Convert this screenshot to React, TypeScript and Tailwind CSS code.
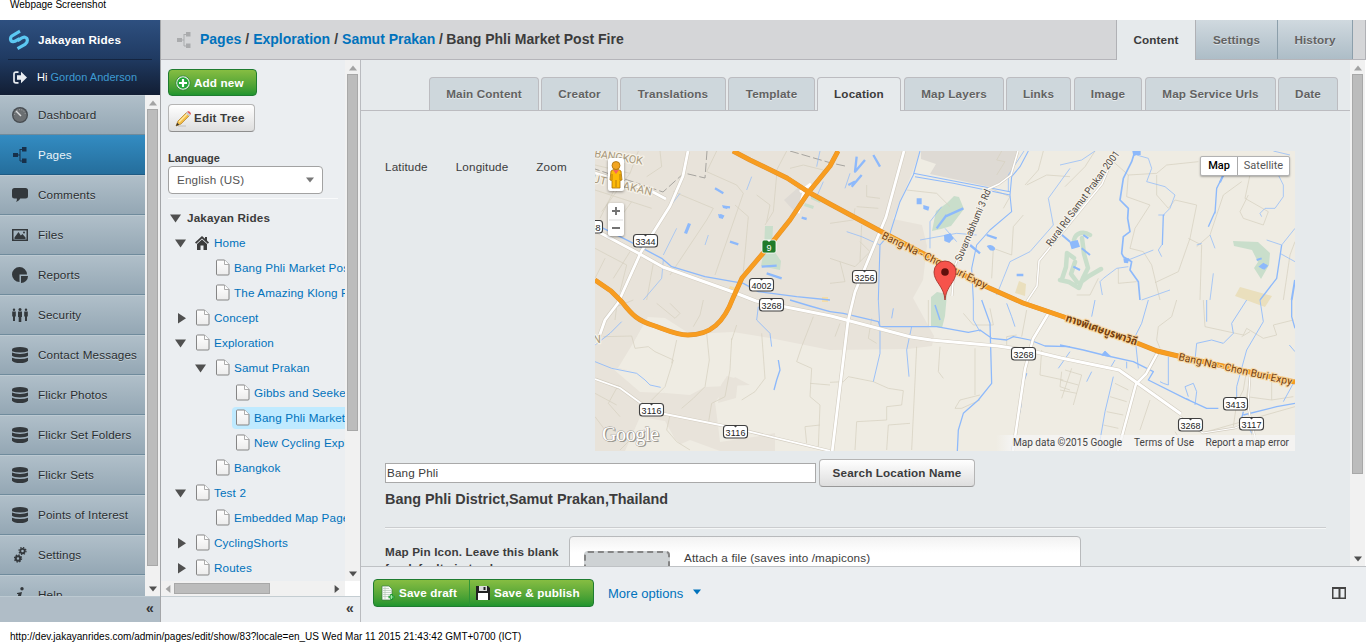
import React from "react";

type IconProps = { className?: string };

const Logo = () => (
  <svg width="22" height="22" viewBox="0 0 22 22" fill="none" stroke="#5cc8f2" strokeWidth="3.2">
    <path d="M12 2.200 L4.500 6.500 C1.500 8.500 2 12.300 5.200 12.700 C7 12.800 8.500 11.500 11.500 9.600" />
    <path d="M9.500 19.600 L17 15.400 C20.300 13 20 9 17 8.200 C15 7.800 13 9.200 9.500 11.800" />
  </svg>
);

const SignOut = () => (
  <svg width="14" height="13" viewBox="0 0 14 13">
    <path d="M5.500 1.200H3C1.600 1.200 1 1.800 1 3v7c0 1.200.6 1.800 2 1.800h2.500" fill="none" stroke="#e9edf2" strokeWidth="1.700" />
    <path d="M4 4.200h4V.8l6 5.700-6 5.700V8.800H4z" fill="#e9edf2" />
  </svg>
);

const Gauge = () => (
  <svg width="16" height="16" viewBox="0 0 16 16">
    <circle cx="8" cy="8" r="8" fill="#464b50" />
    <circle cx="8" cy="8" r="6.700" fill="#6b6f72" />
    <path d="M2.600 8a5.400 5.400 0 0 1 10.800 0" fill="none" stroke="#a9adaf" strokeWidth="1" strokeDasharray="1 1.400" />
    <path d="M4 4l5 5" stroke="#dcdedf" strokeWidth="1.400" />
  </svg>
);

const SiteMap = ({ className = "" }: IconProps) => (
  <svg width="14" height="16" viewBox="0 0 14 16" className={className} fill="currentColor">
    <rect x="0" y="6" width="5" height="4" />
    <rect x="9" y="0" width="4.500" height="4.500" />
    <rect x="9" y="11.500" width="4.500" height="4.500" />
    <path d="M5 7.500h2v1H5zM6.500 2h1v12h-1zM7 2h2v1H7zM7 13.500h2v1H7z" />
  </svg>
);

const Bubble = () => (
  <svg width="16" height="14" viewBox="0 0 16 14" fill="#33383c">
    <path d="M2.500 0h11A2.500 2.500 0 0 1 16 2.500v5.500a2.500 2.500 0 0 1-2.500 2.500H8.200C7.600 12 6.200 13.200 4 14c.9-1.200 1-2.400.8-3.500H2.500A2.500 2.500 0 0 1 0 8V2.500A2.500 2.500 0 0 1 2.500 0z" />
  </svg>
);

const Picture = () => (
  <svg width="16" height="12" viewBox="0 0 16 12">
    <rect x=".75" y=".75" width="14.500" height="10.500" fill="none" stroke="#33383c" strokeWidth="1.500" />
    <path d="M2.500 10V8.500L6.500 3l2.300 3.500L10.500 5l3 3.500V10z" fill="#33383c" />
    <circle cx="12" cy="3.500" r="1" fill="#33383c" />
  </svg>
);

const Pie = () => (
  <svg width="16" height="16" viewBox="0 0 16 16" fill="#33383c">
    <path d="M7.500 0a7.500 7.500 0 0 1 7.500 7.500H7.500V15a7.500 7.500 0 0 1 0-15z" />
    <path d="M9 9h7a7 7 0 0 1-7 7z" />
  </svg>
);

const People = () => (
  <svg width="16" height="14" viewBox="0 0 16 14" fill="#33383c">
    <circle cx="2" cy="1.800" r="1.200" /><circle cx="8" cy="1.500" r="1.500" /><circle cx="14" cy="1.800" r="1.200" />
    <path d="M.2 3.500h3.600v5H3V13H1V8.500H.2zM6 3.500h4V9h-.7v5H6.700V9H6zM12.200 3.500h3.600v5H15V13h-2V8.500h-.8z" />
  </svg>
);

const Database = () => (
  <svg width="16" height="16" viewBox="0 0 16 16" fill="#33383c">
    <ellipse cx="8" cy="2.200" rx="8" ry="2.200" />
    <path d="M0 2.500h16v1.700q-3 1.300-8 1.300T0 4.200z" />
    <path d="M0 5.500q3 1.400 8 1.400t8-1.400v3.200q-2 1.700-8 1.700T0 8.700zM0 10.700q3 1.400 8 1.400t8-1.400v3q-2 2.300-8 2.300t-8-2.300z" />
  </svg>
);

const Gears = () => (
  <svg width="13" height="16" viewBox="0 0 13 16" fill="none" stroke="#33383c">
    <circle cx="8.500" cy="4" r="2.200" strokeWidth="1.800" />
    <circle cx="8.500" cy="4" r="3.500" strokeWidth="1.200" strokeDasharray="1.400 1.350" />
    <circle cx="4" cy="11.500" r="2.200" strokeWidth="2" />
    <circle cx="4" cy="11.500" r="3.500" strokeWidth="1.400" strokeDasharray="1.400 1.350" />
  </svg>
);

const Info = () => (
  <svg width="8" height="16" viewBox="0 0 8 16" fill="#33383c">
    <circle cx="6" cy="1.800" r="1.700" />
    <path d="M1 6l5-1-2 8 1.800-.8C4.800 14.500 1 16.500 1 13.500L2.400 7 1 7z" />
  </svg>
);

const Doc = () => (
  <svg width="14" height="17" viewBox="0 0 14 17" className="ml-px shrink-0">
    <defs>
      <linearGradient id="docfill" x1="0" y1="0" x2="0" y2="1">
        <stop offset="0" stopColor="#fff" /><stop offset="1" stopColor="#ececec" />
      </linearGradient>
    </defs>
    <path d="M1.500 1h7L13 5.500V15q0 1-1 1H1.500q-1 0-1-1V2q0-1 1-1z" fill="url(#docfill)" stroke="#858585" />
    <path d="M8.500 1v4.500H13" fill="#fff" stroke="#999" strokeWidth=".8" />
  </svg>
);

const House = () => (
  <svg width="14" height="14" viewBox="0 0 14 14" className="shrink-0" fill="#3c3c3c">
    <path d="M7 0L0 6.500l1.200 1.200L7 2.500l5.800 5.200L14 6.500l-2-2V1h-2v1.700z" />
    <path d="M2 8l5-4.500L12 8v6H8.500V9.500h-3V14H2z" />
  </svg>
);

const AddIcon = () => (
  <svg width="16" height="16" viewBox="0 0 16 16">
    <circle cx="8" cy="8" r="7.200" fill="#eaf3ea" stroke="#2c7c34" strokeWidth=".8" />
    <circle cx="8" cy="8" r="5.800" fill="#22a636" />
    <path d="M8 4v8M4 8h8" stroke="#fff" strokeWidth="2.200" />
  </svg>
);

const Pencil = () => (
  <svg width="17" height="17" viewBox="0 0 17 17">
    <path d="M3 16h8" stroke="#aaa" strokeOpacity=".6" />
    <path d="M1 16l2-5L11.500 2.500l3 3L6 14z" fill="#f2bd46" stroke="#b98732" strokeWidth=".8" />
    <path d="M4 12l8.500-8.500" stroke="#ffe9a4" strokeWidth="1.400" />
    <path d="M10.800 3.200l1.500-1.500 3.200 3L14 6.200z" fill="#c9ced4" />
    <path d="M12.200 1.700C13.500.2 17 3 15.500 4.800z" fill="#e65450" />
    <path d="M1 16l1.200-3.200 2 2z" fill="#333" />
  </svg>
);

const DraftIcon = () => (
  <svg width="14" height="16" viewBox="0 0 14 16">
    <path d="M1 1h7l3 3v11H1z" fill="#f7faf7" stroke="#3b7942" strokeWidth=".7" />
    <path d="M2 3.500h6M2 5.500h8M2 7.500h8M2 9.500h8M2 11.500h8M4 2v12" stroke="#b2c6b6" strokeWidth=".7" />
    <path d="M10.500 9v6M7.500 12h6" stroke="#199a2d" strokeWidth="2.500" />
    <path d="M10.500 10v4M8.500 12h4" stroke="#b8f0bb" strokeWidth=".8" />
  </svg>
);

const Floppy = () => (
  <svg width="16" height="16" viewBox="0 0 16 16">
    <path d="M1 1h12l2 2v12H1z" fill="#222" />
    <path d="M4 1h8v5H4z" fill="#ddd" /><path d="M8.500 2h2v3h-2z" fill="#222" />
    <path d="M3 8h10v7H3z" fill="#fff" />
  </svg>
);

type Dir = "up" | "down" | "left" | "right";
const Tri = ({ dir, className = "" }: { dir: Dir; className?: string }) => {
  const paths: Record<Dir, string> = {
    up: "M0 8L5 2l5 6z", down: "M0 2h10L5 8z", left: "M8 0v10L2 5z", right: "M2 0v10l6-5z",
  };
  return (
    <svg viewBox="0 0 10 10" className={className} fill="currentColor"><path d={paths[dir]} /></svg>
  );
};

const TreeArrow = ({ dir }: { dir: Dir }) => (
  <svg width="11" height="11" viewBox="0 0 11 11" className="mt-0.5" fill="#505050">
    <path d={dir === "down" ? "M0 1.500h11L5.500 9.500z" : "M3 0v10.500l8-5.200z"} />
  </svg>
);

const VScroll = ({ thumb }: { thumb: string }) => (
  <div className="flex w-[15px] shrink-0 flex-col items-center justify-between bg-[#f1f1f1]">
    <div className="flex min-h-0 flex-1 flex-col items-center">
      <div className="flex h-3.5 items-center pt-0.5"><Tri dir="up" className="size-2 text-[#a3a3a3]" /></div>
      <div className={"w-[11px] border border-[#a8a8a8] bg-[#bcbcbc] " + thumb} />
    </div>
    <div className="flex h-3.5 items-center"><Tri dir="down" className="size-2 text-[#505050]" /></div>
  </div>
);

const nav: [string, React.ReactNode][] = [
  ["Dashboard", <Gauge />], ["Pages", <SiteMap className="text-[#17304a]" />], ["Comments", <Bubble />],
  ["Files", <Picture />], ["Reports", <Pie />], ["Security", <People />],
  ["Contact Messages", <Database />], ["Flickr Photos", <Database />], ["Flickr Set Folders", <Database />],
  ["Flickr Sets", <Database />], ["Points of Interest", <Database />], ["Settings", <Gears />], ["Help", <Info />],
];

const Sidebar = () => (
  <aside className="flex w-40 shrink-0 flex-col bg-[#b0bdc7]">
    <div className="h-[75px] shrink-0 bg-linear-to-b from-[#2e5080] via-[#203b63] to-[#121e34] text-white">
      <div className="mx-2 flex h-10 items-center border-b border-[#142440] font-bold">
        <Logo /><span className="ml-2">Jakayan Rides</span>
      </div>
      <div className="flex h-[35px] items-center pl-[13px] text-[11px] tracking-[0.02px]">
        <SignOut /><span className="ml-2.5">Hi <span className="text-[#3e9bd2]">Gordon Anderson</span></span>
      </div>
    </div>
    <div className="flex h-[501px] shrink-0">
      <nav className="w-[145px] overflow-hidden">
        {nav.map(([label, icon]) => (
          <div key={label} className={"flex h-10 items-center border-b whitespace-nowrap " + (label === "Pages"
            ? "border-[#1e5a83] bg-linear-to-b from-[#338cc2] to-[#256e9c] text-[#e8f2f8]"
            : "border-[#6f8b9c] border-t border-t-[#bdcad2] bg-linear-to-b from-[#b0bfc9] to-[#94a7b4] text-[#292d30] [text-shadow:0_1px_0_rgba(255,255,255,.4)]")}>
            <span className="flex w-[38px] shrink-0 justify-center pl-0.5">{icon}</span>{label}
          </div>
        ))}
      </nav>
      <VScroll thumb="h-[457px]" />
    </div>
    <div className="flex h-[26px] items-center justify-end border-t border-[#bcc9d1] pr-1.5 pb-0.5 text-[14px] font-bold text-[#333]">«</div>
  </aside>
);

type Row = { indent: string; arrow?: Dir; icon: "doc" | "home" | "none"; label: string; selected?: boolean };
const rows: Row[] = [
  { indent: "pl-[9px]", arrow: "down", icon: "none", label: "Jakayan Rides" },
  { indent: "pl-[14px]", arrow: "down", icon: "home", label: "Home" },
  { indent: "pl-[34px]", icon: "doc", label: "Bang Phli Market Post Fire" },
  { indent: "pl-[34px]", icon: "doc", label: "The Amazing Klong Ride" },
  { indent: "pl-[14px]", arrow: "right", icon: "doc", label: "Concept" },
  { indent: "pl-[14px]", arrow: "down", icon: "doc", label: "Exploration" },
  { indent: "pl-[34px]", arrow: "down", icon: "doc", label: "Samut Prakan" },
  { indent: "pl-[54px]", icon: "doc", label: "Gibbs and Seekers" },
  { indent: "pl-[54px]", icon: "doc", label: "Bang Phli Market Post Fire", selected: true },
  { indent: "pl-[54px]", icon: "doc", label: "New Cycling Exploration" },
  { indent: "pl-[34px]", icon: "doc", label: "Bangkok" },
  { indent: "pl-[14px]", arrow: "down", icon: "doc", label: "Test 2" },
  { indent: "pl-[34px]", icon: "doc", label: "Embedded Map Pages" },
  { indent: "pl-[14px]", arrow: "right", icon: "doc", label: "CyclingShorts" },
  { indent: "pl-[14px]", arrow: "right", icon: "doc", label: "Routes" },
];

const Tree = () => (
  <section className="flex w-[199px] shrink-0 flex-col">
    <div className="flex h-[536px] shrink-0 bg-[#ebeef1]">
      <div className="flex w-[184px] flex-col overflow-hidden">
        <div className="h-[521px] shrink-0 overflow-hidden">
          <div className="flex flex-col items-start pt-[9px] pl-[7px]">
            <button className="flex h-[27px] w-[89px] items-center gap-[3px] rounded border border-[#1f7c31] bg-linear-to-b from-[#86bd42] to-[#1f952f] pl-1.5 font-bold whitespace-nowrap text-white">
              <AddIcon />Add new
            </button>
            <button className="mt-2 flex h-7 w-[87px] items-center gap-0.5 rounded border border-[#b5b5b5] border-b-[#8e8e8e] bg-linear-to-b from-white to-[#dedede] pl-1.5 font-bold whitespace-nowrap text-[#3c3c3c]">
              <Pencil />Edit Tree
            </button>
            <div className="mt-[19px] h-[15px] text-[11px] leading-[14px] font-bold tracking-normal">Language</div>
            <div className="flex h-7 w-[155px] items-center justify-between rounded border border-[#a2a2a2] bg-white px-2 text-[#555]">
              English (US)<Tri dir="down" className="size-2 text-[#777]" />
            </div>
            <div className="mt-1 h-px w-[170px] bg-white/70" />
          </div>
          <div className="mt-1.5">
            {rows.map((r, i) => (
              <div key={i} className={"flex h-[25px] items-center whitespace-nowrap " + r.indent}>
                <span className="flex w-5 shrink-0">{r.arrow && <TreeArrow dir={r.arrow} />}</span>
                <div className={"flex h-[22px] items-center " + (r.selected ? "-ml-[3px] rounded-l bg-[#bfeaff] pl-[3px]" : "")}>
                  {r.icon !== "none" && <span className="flex w-[19px] shrink-0">{r.icon === "doc" ? <Doc /> : <House />}</span>}
                  <span className={r.icon === "none" ? "-ml-[3px] font-bold" : "text-[#0072bc]"}>{r.label}</span>
                </div>
              </div>
            ))}
          </div>
        </div>
        <div className="flex h-[15px] items-center bg-[#f1f1f1]">
          <span className="flex w-[13px] justify-center"><Tri dir="left" className="size-2 text-[#a3a3a3]" /></span>
          <div className="h-[11px] w-24 border border-[#a8a8a8] bg-[#bcbcbc]" />
          <Tri dir="right" className="mr-1 ml-auto size-2 text-[#505050]" />
        </div>
      </div>
      <div className="flex w-[15px] flex-col bg-white"><div className="flex h-[521px]"><VScroll thumb="h-[357px]" /></div></div>
    </div>
    <div className="flex h-[26px] items-center justify-end border-t border-[#c4cdd2] bg-[#ebeef1] pr-1.5 pb-0.5 text-[14px] font-bold">«</div>
  </section>
);

const Shield = ({ x, y, n }: { x: number; y: number; n: string }) => (
  <g>
    <rect x={x - 11.5} y={y - 5.5} width="24" height="12.500" rx="3" fill="#fff" stroke="#3f3f3f" strokeWidth="1.100" />
    <path d={`M${x - 1.5} ${y - 5.5}h4l-2 2z`} fill="#3f3f3f" />
    <text x={x + 0.5} y={y + 5} textAnchor="middle" fontSize="9" fontFamily="Liberation Sans" fill="#222" textLength="20">{n}</text>
  </g>
);

const Tile = ({ x, y, children }: { x: number; y: number; children: React.ReactNode }) => (
  <g transform={`translate(${x} ${y}) scale(.3333333)`}>{children}</g>
);

const minorRoads: [string, number][] = [
  ["M688 151l-5 25-13 30-29 46-23 51L605 320 598 340M595 173l56 18 15 8", 2.8],
  ["M904 151l-18 66-31 75-7 29-16 132", 2.8],
  ["M595 379l25 9 22 16 M660 413l70 14 100 24", 1.8],
  ["M1018 151l-7 24-12 9-11 5-34 79-2 28M1116 151l-14 33-63 77-2 25-10 15", 1.5],
  ["M1158 352l-12 22-10 10-18 67M1048 314l-15 25-8 30-12 82", 2.5],
  ["M1180 417l23 16 32-5 18-7M1250 375l-2 32 10 44", 1.2],
];

const route3268 = "M595 230l15 8 28 15 25 14 70 25 23 9 75 15 80 21 20 3 67 6 34 5 29 7 58 12 17 12 45 32";
const motorway = "M733 151L750 160 787 178 810 193 830 204 882 232 987 287 1023 303 1070 319 1137 343 1157 351 1178 356 1295 382M838 151L830 166 808 193 790 220 770 245 742 278 733 298C724 322 711 335 688 335 676 335 664 329 655 326 638 321 632 315 622 302L611 291 595 280";

const MapArt = () => (
  <svg width="700" height="300" viewBox="595 151 700 300" className="block tracking-normal">
    <rect x="595" y="151" width="700" height="300" fill="#efece3" />
    {/* built-up land */}
    <path d="M595 151H920L912 173 893 219 922 225 927 246 923 280 913 298 934 336 932 346 908 349 830 350 770 338 733 332 690 334 665 318 648 317 635 340 618 368 650 375 665 393 690 395 705 387 750 385 735 377 715 402 718 425 720 442 760 436 775 433 775 451 720 451 690 440 665 451 595 451z" fill="#e8e3da" />
    <path d="M612 368L650 373 665 393 640 392zM648 317L633 344 672 360 676 340z" fill="#efece3" />
    <path d="M727 376l11 3-2 19-18 5 3-18z" fill="#e8e3da" />
    <path d="M625 451l15-34 25 4 10 18 14 12z" fill="#efece3" />
    <path d="M921 151H1018L1009 178 990 187 930 174 936 164 921 159z" fill="#dedad4" />
    <path d="M784 200l17-15 10 9-17 17z" fill="#dedad4" />
    <path d="M1235 296l5-9 32 9-7 11z" fill="#eadfbd" />
    <path d="M1015 293l4-12 7 3-1 12z" fill="#eadfbd" />
    <path d="M730 286l7 2-1 5-8-2zM822 297h6v5h-6z" fill="#f5dda7" />

    {/* parks */}
    <g fill="#c9decb">
      <path d="M765 226h8l-1 22 9 13-1 9-19-4 3-16zM936 211l11-8 7-7 5 1 5 12-13 17-10 3-9 2zM931 297l6-5 10 2-2 22-3 12-11-2zM1233 241l25 1 12 11-1 12-8 14-7-11 4-6-6-12-18-4zM805 203l9 3-1 3-9-3zM811 195l10 4-1 4-9-4z" />
    </g>
    <g fill="none" stroke="#c9decb" strokeWidth="4.500" strokeLinecap="round" strokeLinejoin="round">
      <path d="M1074 240c2-8 10-9 16-5M1082 238l2 16 4 14-5 10-4 10-10-6-9-2M1062 279l4-12 1-14 7 5M1101 269l-12 7-8 6M1075 262l-4 12 6 8" />
    </g>

    {/* parcel lines */}
    <g fill="none" stroke="#d6d0c0" strokeWidth="2.200" strokeLinejoin="round">
      <Tile x={590} y={145}>
        <path d="M15 60L120 85 145 18M120 85L35 200M15 135L185 190M75 130L30 220M125 170L85 225M210 18L215 65 170 95M250 140L370 190 350 225 240 390M380 18L350 80 440 120 460 145 375 390M435 180L475 215 460 380M560 90L550 200 525 240M590 18L555 85 600 100M600 70L640 60 700 75M15 310L110 360 90 440M45 340L15 400M120 320L70 400M190 355L170 465M500 150L540 180 530 230" />
      </Tile>
      <Tile x={830} y={145}>
        <path d="M110 120V155L150 160M80 185L145 190M0 235L70 225 75 190M90 290L120 320 75 365 0 340M95 240L90 350M30 350L45 410 0 415M230 135L320 145 360 185M640 18L625 75 585 120M720 95L650 90 590 120M580 210L550 245 545 330 490 310 485 400M480 130L540 155 520 190M500 90L525 50 500 45 515 18" />
      </Tile>
      <Tile x={1060} y={145}>
        <path d="M15 125L75 65 105 18M160 50L205 90 290 85 320 60 415 50M205 90L200 155 270 180 225 250 210 310 250 320 275 360 300 465M290 90L290 150 325 190 345 165 410 180 390 280 355 380 285 413M385 280L425 300 420 465M545 110L490 150 450 270 410 305M570 90L555 160 625 200 610 240 550 220 540 200 565 150M50 450H90L115 400M175 370V415L230 410M705 290L690 330 670 465" />
      </Tile>
      <Tile x={590} y={300}>
        <path d="M40 110L125 108 135 145 175 140 195 155 250 180 225 260 185 300M260 120L245 190M350 100L358 180 345 260 310 295 275 325M425 115L420 210 405 290 365 310 355 370M440 75L425 120M515 100L525 235 495 275 455 300M670 50L635 140 620 185 665 205 660 290 690 315 685 440M690 375L645 380 650 430M660 250L720 255M15 280L80 315M85 255L55 310 90 350M15 350L45 390M75 60L80 20 130 0M200 10L255 55 270 40 240 10M340 0L330 45 310 80M240 345L230 390 260 425 300 450M120 420L90 450" />
      </Tile>
      <Tile x={830} y={300}>
        <path d="M0 247L40 245 55 230 130 245 175 265 220 272 215 315 170 320 170 360 80 365 75 450M260 140L245 450M330 140L325 215 340 235M435 145V285M450 285L390 300 375 325 395 325 450 300M170 450L175 375 240 370M30 70L15 110M125 55L115 115 140 130M590 30L575 110M635 150L630 225 700 240M695 215L690 260 720 270M295 0V80M400 40L430 75 490 75 480 25M530 135V110L560 105" />
      </Tile>
      <Tile x={1060} y={300}>
        <path d="M15 210L65 225 40 315M35 205L5 295M0 240L55 255M0 270L50 280M165 250L205 270M150 290L200 305M140 335L190 345M130 375L175 385M350 0L335 50 295 80 290 120 300 145M430 0L435 80 550 105 560 85 610 115 650 105 640 75 700 60M545 110L570 95M570 225L560 290 635 300 700 290M520 380L530 310 550 270 560 210M270 300L240 390M345 395L380 450M430 398L705 320M580 450L570 350M635 225V300" />
      </Tile>
    </g>

    {/* district boundaries */}
    <g fill="none" stroke="#a6a49f" strokeWidth="1" strokeDasharray="9 3">
      <path d="M707 151L705 178 684 173 663 192 595 169M790 151L831 163 845 166" />
    </g>

    {/* canals and ponds */}
    <g fill="none" stroke="#8db9fb" strokeWidth="2.600" strokeLinejoin="round">
      <Tile x={590} y={145}>
        <path d="M30 245L120 290 215 340 245 365 345 395 460 415 505 440 620 455 720 465" strokeWidth="4" />
        <path d="M270 145L210 225 190 260M220 345L215 400 160 465M260 250L220 330M355 270L345 300M485 95L470 135M690 18L680 65M700 110L680 155" strokeWidth="2" />
        <path d="M375 130L400 145M400 185L420 187M390 210L402 215M420 290L445 298M515 365L560 362M530 385L575 400M635 218L650 222" strokeWidth="7" />
      </Tile>
      <Tile x={830} y={145}>
        <path d="M270 18L250 90 210 170 180 265 150 300 145 465M250 85L355 105 540 140M255 95L370 115 540 150M595 18L570 65 545 95 540 150 545 200 480 255 440 300 425 370 430 465" strokeWidth="3.200" />
        <path d="M582 18L535 90V140M60 85L45 130M335 185L300 230 300 310M270 285L380 265 440 270M50 260L95 275 150 300M720 70L655 160 670 240 600 320 540 350 520 400 500 450M380 290L345 250" strokeWidth="2.200" />
        <path d="M80 35L75 80 105 45M130 30L150 65M95 90L65 125M345 215L400 190M320 250L350 210M345 280H370M390 325L405 300M450 325L420 300M470 270L500 280M560 390H580M55 120l20-10" strokeWidth="7" />
        <path d="M260 160h15v18h-15zM280 180l18 5-3 12-15-5zM470 303q15-8 25 5 2 12-15 8zM342 270l20-5 8 15-12 14-15-6z" fill="#8db9fb" stroke="none" />
      </Tile>
      <Tile x={1060} y={145}>
        <path d="M225 18L215 50 190 100 180 165 205 190 203 220 210 260 190 275 185 325 190 335 215 350 210 375 235 410 240 465" strokeWidth="5" />
        <path d="M0 60L65 45 105 18M230 30L265 40 275 70 260 110 315 125 345 150 330 190 310 210M305 300L295 315 305 335M295 210H315M205 345L280 315M450 270L465 310M425 295L410 300M460 385L450 465M640 18L690 30M655 90L670 120 670 155 645 190 615 190 600 205 605 215M620 285L665 300M665 300L705 250M660 325L705 350M130 400L170 370 205 365M130 400L120 410 127 450M245 465L330 435" strokeWidth="2.200" />
        <path d="M310 210L307 300M465 200L445 245M490 90L470 130 465 205M665 300L650 400 600 465" strokeWidth="4" />
        <path d="M490 90L480 112M70 270L85 280M0 265L30 290M65 310L90 330M40 365L60 375M590 345L605 340M605 370L620 360M705 405L695 465" strokeWidth="6" />
        <path d="M217 18h25v12h-12l-10 4zM28 290l25-5 7 20-25 8zM190 340h18l-4 15-12-2zM595 365l15-12 15 9-12 12z" fill="#8db9fb" stroke="none" />
      </Tile>
      <Tile x={590} y={300}>
        <path d="M15 135L60 100 95 65M15 185L65 205 140 220 165 240 180 255 212 262" />
        <path d="M600 0L660 18 720 35M565 180L570 210 560 240 552 270" strokeWidth="4" />
        <path d="M505 20L500 60 540 100 545 140" />
      </Tile>
      <Tile x={830} y={300}>
        <path d="M0 35L40 40 145 65 150 80 320 80 415 97 450 90 485 115 530 120 550 110 600 120 645 138 720 140M455 0L480 70 485 250 445 300 400 340 385 390 382 453" strokeWidth="3.800" />
        <path d="M145 0L150 90 150 160 130 245M245 80L230 150 237 230M190 25L185 55M430 0V60L450 95M530 10L545 50 555 80M720 155L685 205" />
        <path d="M590 220L575 260 572 320 545 450M315 15L330 60" strokeWidth="4.500" />
      </Tile>
      <Tile x={1060} y={300}>
        <path d="M0 135L70 150 130 165 220 185 280 215 265 240 375 295 440 325 475 325M550 345L650 320 705 310M550 335L545 355 570 370M695 0V50L705 85" strokeWidth="4" />
        <path d="M265 0L245 70 225 110 235 205M105 0L95 50M325 170V255L310 250 300 245M440 65V0M410 130L455 120 490 130 520 100 515 70 560 0M600 0L610 65 560 150 530 260V300M385 290L375 260 400 250 410 275 405 315M410 130L405 180M160 230L135 335 115 450M95 215L80 245M165 180L150 205M700 250L670 305M565 380L575 400M200 185V205" />
        <path d="M125 165l10-12 18 17zM688 135l17 20M560 370l15 15M375 295l13 4" fill="#8db9fb" />
      </Tile>
      <path d="M688 223l3 1-4 10-3-1zM718 214l5 1v4l-4-1zM722 205l6 2-1 2-4-1z" fill="#8db9fb" stroke="none" />
    </g>

    {/* local roads */}
    <g fill="none" strokeLinejoin="round">
      {minorRoads.map(([d, w]) => <path key={d} d={d} stroke="#d3cdc1" strokeWidth={w + 1.2} />)}
      <path d={route3268} stroke="#d3cdc1" strokeWidth="4.200" />
      {minorRoads.map(([d, w]) => <path key={d} d={d} stroke="#fff" strokeWidth={w} />)}
      <path d={route3268} stroke="#fff" strokeWidth="3" />
    </g>

    {/* motorways */}
    <path d="M800 192l11-8M798 213l6-21" stroke="#fff" strokeWidth="3" />
    <g fill="none" strokeLinejoin="round">
      <path d={motorway} stroke="#df9230" strokeWidth="4.900" />
      <path d={motorway} stroke="#f89d20" strokeWidth="4" />
    </g>

    <g fontFamily="Roboto" fontSize="10.500" stroke="#f6f2e9" strokeWidth="2.500" strokeLinejoin="round" paintOrder="stroke">
      <g fill="#a8997c" fontSize="11">
        <text transform="translate(594 157) rotate(9)" textLength="49">BANGKOK</text>
        <text transform="translate(592 182) rotate(13)" textLength="61">UT PRAKAN</text>
        <text x="593" y="343">N</text>
      </g>
      <g fill="#74400f" stroke="#fbd9a0" strokeOpacity=".8">
        <text transform="translate(881 238) rotate(26)" textLength="116">Bang Na - Chon Buri Expy</text>
        <text transform="translate(1178 360) rotate(12.500)" textLength="116">Bang Na - Chon Buri Expy</text>
        <text transform="translate(1065 321) rotate(19)" fontSize="11" fontWeight="700" fontFamily="Noto Sans Thai, Noto Sans, DejaVu Sans, sans-serif" textLength="75" lengthAdjust="spacingAndGlyphs">ทางพิเศษบูรพาวิถี</text>
      </g>
      <g fill="#4e4843" fontSize="10">
        <text transform="translate(961 262) rotate(-67)" textLength="77" lengthAdjust="spacingAndGlyphs">Suvarnabhumi 3 Rd</text>
        <text transform="translate(1051 247) rotate(-53.500)" textLength="116" lengthAdjust="spacingAndGlyphs">Rural Rd Samut Prakan 2001</text>
      </g>
    </g>

    <Shield x={590} y={226} n="3268" /><Shield x={645} y={240} n="3344" /><Shield x={761} y={284} n="4002" />
    <Shield x={771} y={304} n="3268" /><Shield x={864} y={276} n="3256" /><Shield x={1023} y={353} n="3268" />
    <Shield x={651} y={409} n="3116" /><Shield x={735} y={431} n="3116" /><Shield x={1235} y={403} n="3413" />
    <Shield x={1190} y={424} n="3268" /><Shield x={1251} y={423} n="3117" />
    <rect x="762" y="240" width="14" height="13" rx="2" fill="#207b2a" stroke="#fff" strokeWidth=".8" />
    <path d="M767 240h4l-2 2z" fill="#fff" />
    <text x="769" y="251" fontSize="9" fontFamily="Liberation Sans" textAnchor="middle" fill="#fff">9</text>

    {/* marker */}
    <path d="M945 300c-1-14-11-18-11-28a11 11 0 0 1 22 0c0 10-10 14-11 28z" fill="#f6534b" stroke="#a7352d" strokeWidth=".9" />
    <circle cx="945" cy="272" r="3.800" fill="#5f100c" />

    <g fontFamily="Liberation Serif" fontSize="20">
      <text x="603.200" y="442.200" textLength="57" fill="#77736c" fillOpacity=".75">Google</text>
      <text x="602" y="441" textLength="57" fill="#fff" stroke="#a5a199" strokeWidth=".8" paintOrder="stroke">Google</text>
    </g>

    <defs><linearGradient id="fade"><stop stopColor="#f5f5f5" stopOpacity="0" /><stop offset="1" stopColor="#f5f5f5" stopOpacity=".75" /></linearGradient></defs>
    <rect x="996" y="435" width="14" height="16" fill="url(#fade)" />
    <rect x="1010" y="435" width="285" height="16" fill="#f5f5f5" fillOpacity=".75" />
    <g fontFamily="Roboto" fontSize="10" fill="#444">
      <text x="1013" y="446" textLength="109">Map data ©2015 Google</text>
      <text x="1134" y="446" textLength="60">Terms of Use</text>
      <text x="1205.500" y="446" textLength="83.500">Report a map error</text>
    </g>
  </svg>
);

const MapPanel = () => (
  <div className="relative h-[300px] w-[700px] overflow-hidden">
    <MapArt />
    <div className="absolute top-[7px] left-[13px] flex h-[33px] w-4 justify-center rounded-xs bg-white pt-[3px] shadow-[0_1px_3px_rgba(0,0,0,.4)]">
      <svg width="14" height="28" viewBox="0 0 14 28" stroke="#a86f0b" strokeWidth=".8">
        <path d="M2 10q5-4 10 0l1 9-2 .5V27H3v-7.500L1 19z" fill="#fdba08" />
        <circle cx="7" cy="4.500" r="4" fill="#f2a521" />
        <path d="M4 9h6l-3 4z" fill="#f4665e" stroke="none" /><path d="M7 19v7M3 13v6M11 13v6" />
      </svg>
    </div>
    <div className="absolute top-[52px] left-[13px] flex h-[33px] w-4 flex-col items-center rounded-xs bg-white shadow-[0_1px_3px_rgba(0,0,0,.4)]">
      <svg width="16" height="33" viewBox="0 0 16 33" fill="none"><path d="M4 8h8M8 4v8M4 25h8" stroke="#737373" strokeWidth="1.900" /><path d="M1 17h14" stroke="#ddd" /></svg>
    </div>
    <div className="absolute top-[5px] left-[605px] flex h-5 w-[90px] items-center rounded-xs border border-[#b2b2b2] bg-white font-[Roboto] text-[11px] tracking-normal shadow-[0_1px_2px_rgba(0,0,0,.3)]">
      <span className="w-9 text-center font-medium text-black">Map</span>
      <span className="flex h-full flex-1 items-center justify-center border-l border-[#aaa] text-[#565656]">Satellite</span>
    </div>
  </div>
);

const tabs: [string, string][] = [
  ["Main Content", "w-[110px]"], ["Creator", "w-[77px]"], ["Translations", "w-[106px]"], ["Template", "w-[87px]"],
  ["Location", "w-[84px]"], ["Map Layers", "ml-px w-[100px]"], ["Links", "w-[65px]"], ["Image", "ml-px w-[68px]"],
  ["Map Service Urls", "ml-px w-[131px]"], ["Date", "w-[60px]"],
];

const ContentArea = () => (
  <div className="flex h-[506px]">
    <div className="flex w-[989px] flex-col overflow-hidden bg-[#e6eaec]">
      <div className="flex h-[51px] shrink-0 items-end justify-end gap-0.5 border-b border-[#bcbcc0] pr-3">
        {tabs.map(([t, w]) => (
          <div key={t} className={"flex shrink-0 items-center justify-center rounded-t border border-[#bcbcc0] font-bold whitespace-nowrap " + w +
            (t === "Location" ? " -mb-px h-[34px] border-b-0 bg-[#e6eaec] pb-px text-[#3c3c3c]" : " h-[33px] border-b-0 bg-[#ced7dc] text-[#626262] [text-shadow:0_1px_0_rgba(255,255,255,.5)]")}>{t}</div>
        ))}
      </div>
      <div className="flex shrink-0 pt-10 pl-6">
        <div className="flex w-[210px] gap-7 pt-[7.5px] leading-4"><span>Latitude</span><span>Longitude</span><span>Zoom</span></div>
        <MapPanel />
      </div>
      <div className="mt-2 flex h-7 shrink-0 items-center gap-[3px] pl-6">
        <div className="flex h-5 w-[431px] items-center border border-[#a9a9a9] bg-white pl-px">Bang Phli</div>
        <button className="h-7 w-[156px] rounded border border-[#b5b5b5] border-b-[#999] bg-linear-to-b from-white to-[#dedede] font-bold text-[#3c3c3c]">Search Location Name</button>
      </div>
      <div className="mt-0.5 ml-6 shrink-0 text-[14.4px] leading-5 font-bold tracking-normal">Bang Phli District,Samut Prakan,Thailand</div>
      <div className="mt-[18px] mr-6 ml-6 h-0.5 shrink-0 border-t border-[#cbcdcf] bg-white/60" />
      <div className="mt-[7px] ml-6 flex shrink-0">
        <div className="w-[184px] pt-[7.5px] leading-4 font-bold whitespace-nowrap">Map Pin Icon. Leave this blank<br />for default pin to show</div>
        <div className="flex h-20 w-[512px] rounded-t border border-[#b8babc] bg-linear-to-b from-[#f2f2f2] to-white to-20% pt-3 pl-[14px]">
          <div className="mt-0.5 h-16 w-[86px] rounded-sm border-2 border-dashed border-[#858585] bg-[#ced2d4]" />
          <div className="pt-[.5px] pl-3.5 leading-4">Attach a file (saves into /mapicons)</div>
        </div>
      </div>
    </div>
    <VScroll thumb="h-[400px]" />
  </div>
);

const topTabs: [string, string][] = [["Content", "w-20"], ["Settings", "w-[82px]"], ["History", "w-[75px]"]];

export default function App() {
  return (
    <div className="flex h-[642px] w-[1366px] flex-col overflow-hidden bg-white font-['Liberation_Sans',Arial,sans-serif] text-[11.7px] tracking-[0.14px] text-[#3c3c3c]">
      <div className="h-5 shrink-0 pl-2.5 text-[10px] leading-[10px] tracking-normal text-black">Webpage Screenshot</div>
      <div className="flex h-[602px] shrink-0">
        <Sidebar />
        <div className="flex w-[1206px] flex-col border-l border-[#a4a6a9]">
          <header className="flex h-10 shrink-0 border-b border-[#b5b5ba] bg-[#d5d6d8]">
            <div className="flex flex-1 items-center pl-4 text-[14px] font-bold tracking-normal">
              <SiteMap className="mr-[9px] text-[#aaabad]" />
              <span className="text-[#0072bc]">Pages</span><span className="mx-1">/</span>
              <span className="text-[#0072bc]">Exploration</span><span className="mx-1">/</span>
              <span className="text-[#0072bc]">Samut Prakan</span><span className="mx-[3.500px]">/</span>
              <span>Bang Phli Market Post Fire</span>
            </div>
            {topTabs.map(([t, w]) => (
              <div key={t} className={"flex items-center justify-center font-bold " + w + (t === "Content"
                ? " -mb-px h-10 border-x border-[#b0b1b5] bg-[#e6eaec]"
                : " h-[39px] border-r border-[#8c9fab] bg-linear-to-b from-[#d0d9df] to-[#adbdc7] text-[#626262] [text-shadow:0_1px_0_rgba(255,255,255,.5)]")}>{t}</div>
            ))}
            <div className="w-[13px] border-r border-[#b0b1b5]" />
          </header>
          <div className="flex min-h-0 flex-1">
            <Tree />
            <main className="flex w-[1006px] flex-col border-l border-[#b9bbbf]">
              <ContentArea />
              <footer className="flex flex-1 items-center border-t border-[#bfc2c5] bg-[#ebeef1] pr-5 pb-1 pl-3">
                <div className="flex h-7 w-[221px] overflow-hidden rounded border border-[#1f7c31] bg-linear-to-b from-[#86bd42] to-[#1f952f] font-bold whitespace-nowrap text-white">
                  <div className="flex w-24 items-center gap-1 border-r border-[#2f9536] pl-[7px]"><DraftIcon />Save draft</div>
                  <div className="flex flex-1 items-center gap-[3px] pl-[5px]"><Floppy />Save &amp; publish</div>
                </div>
                <span className="ml-3.5 pt-0.5 text-[13px] tracking-normal text-[#0072bc]">More options</span>
                <Tri dir="down" className="mb-0.5 ml-2.5 size-2 text-[#0072bc]" />
                <svg width="14" height="12" viewBox="0 0 14 12" className="ml-auto" fill="none" stroke="#444">
                  <path d="M.75.75h12.500v10.500H.75z" strokeWidth="1.500" /><path d="M0 1h14M7.500 1v10" strokeWidth="2" stroke="#444" />
                </svg>
              </footer>
            </main>
          </div>
        </div>
      </div>
      <div className="h-5 shrink-0 pt-[9px] pl-2.5 text-[10px] leading-[11px] tracking-[0.015px] text-black">http://dev.jakayanrides.com/admin/pages/edit/show/83?locale=en_US Wed Mar 11 2015 21:43:42 GMT+0700 (ICT)</div>
    </div>
  );
}
